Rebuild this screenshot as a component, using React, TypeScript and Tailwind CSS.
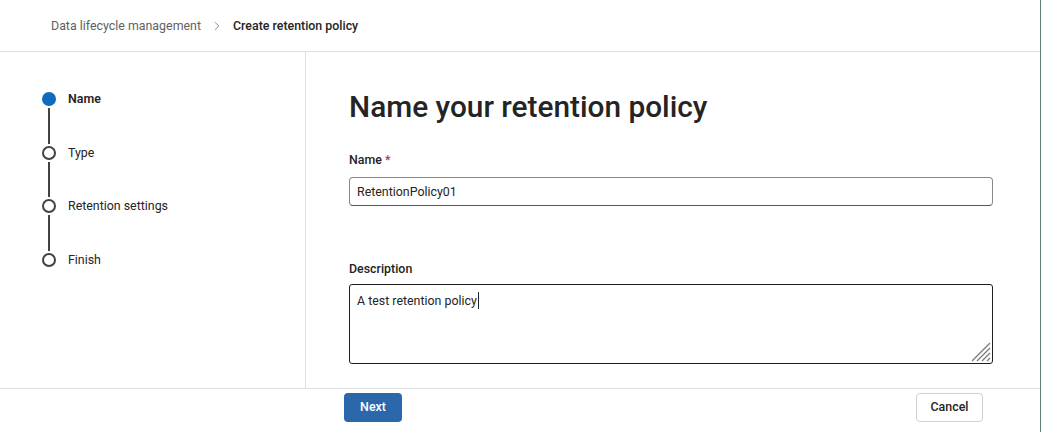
import { ChevronRight } from "lucide-react"

const steps = [
  { label: "Name", active: true },
  { label: "Type", active: false },
  { label: "Retention settings", active: false },
  { label: "Finish", active: false },
]

function Stepper() {
  return (
    <ol className="flex flex-col pl-[42px] pt-[40px]">
      {steps.map((step, i) => (
        <li key={step.label} className="flex flex-col">
          <div className="flex h-[14px] items-center gap-3">
            {step.active ? (
              <span className="size-[14px] rounded-full bg-[#0f6cbd]" />
            ) : (
              <span className="size-[14px] rounded-full border-2 border-[#424242] bg-white" />
            )}
            <span
              className={
                step.active
                  ? "pt-[1px] text-[12.4px] font-semibold text-[#242424]"
                  : "pt-[1px] text-[12.4px] text-[#242424]"
              }
            >
              {step.label}
            </span>
          </div>
          {i < steps.length - 1 ? (
            <span className="ml-[6px] my-[2px] h-[35.5px] w-[2px] bg-[#424242]" />
          ) : null}
        </li>
      ))}
    </ol>
  )
}

function ResizeGrip() {
  return (
    <svg
      className="absolute bottom-[1px] right-[1px]"
      width="22"
      height="22"
      viewBox="0 0 22 22"
      fill="none"
      stroke="#7a7a7a"
      strokeWidth="1.3"
    >
      <path d="M21 3 L3 21" />
      <path d="M21 8 L8 21" />
      <path d="M21 13 L13 21" />
      <path d="M21 18 L18 21" />
    </svg>
  )
}

export default function App() {
  return (
    <div
      className="flex h-[432px] w-[1041px] flex-col overflow-hidden border-r border-[#5b7f78] bg-white text-[#242424]"
      style={{ fontFamily: 'Roboto, "Open Sans", sans-serif' }}
    >
      <header className="flex h-[52px] shrink-0 items-center border-b border-[#e0e0e0] pl-[51px]">
        <nav className="flex items-center pt-[2px] text-[12.4px]">
          <span className="text-[#616161]">Data lifecycle management</span>
          <ChevronRight className="mx-[9px] size-[14px] text-[#616161]" strokeWidth={1.25} />
          <span className="font-medium text-[#242424]">Create retention policy</span>
        </nav>
      </header>

      <div className="flex h-[336px] shrink-0">
        <aside className="w-[306px] shrink-0 border-r border-[#e0e0e0]">
          <Stepper />
        </aside>

        <main className="flex-1 pl-[43px] pr-[47px]">
          <h1 className="mt-[37px] text-[29.8px] leading-[36px] font-medium text-[#242424]">
            Name your retention policy
          </h1>

          <label className="mt-[26px] block text-[12.4px] leading-[18px] font-medium text-[#242424]">
            Name <span className="text-[#c4314b]">*</span>
          </label>
          <div className="mt-[8px] flex h-[29px] items-center rounded-[4px] border border-[#8a8a8a] border-b-[#575757] px-[7px] pt-[1px] text-[12.4px]">
            RetentionPolicy01
          </div>

          <label className="mt-[54px] block text-[12.4px] leading-[18px] font-medium text-[#242424]">
            Description
          </label>
          <div className="relative mt-[6px] h-[80px] rounded-[3px] border border-[#1f1f1f] px-[7px] pt-[3px] text-[12.4px]">
            <span>A test retention policy</span>
            <span className="ml-[1px] inline-block h-[17px] w-[1px] translate-y-[4px] bg-[#242424]" />
            <ResizeGrip />
          </div>
        </main>
      </div>

      <footer className="flex flex-1 items-start border-t border-[#e0e0e0] pt-[4px]">
        <div className="w-[344px] shrink-0" />
        <button className="h-[29px] w-[58px] rounded-[4px] bg-[#2b67ab] text-[12.4px] font-medium text-white">
          Next
        </button>
        <div className="flex-1" />
        <button className="mr-[57px] h-[29px] w-[67px] rounded-[4px] border border-[#d1d1d1] bg-white text-[12.4px] font-medium text-[#242424]">
          Cancel
        </button>
      </footer>
    </div>
  )
}
